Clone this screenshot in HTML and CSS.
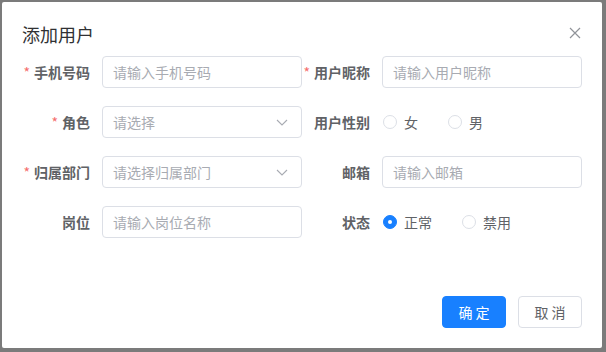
FILE: index.html
```html
<!DOCTYPE html>
<html lang="zh-CN">
<head>
    <meta charset="UTF-8">
    <meta name="viewport" content="width=device-width, initial-scale=1.0">
    <title>添加用户</title>
    <link rel="stylesheet" href="styles.css">
</head>
<body>
    <!-- Add user dialog -->
    <div class="dialog">
        <div class="dialog-header">
            <span class="dialog-title">添加用户</span>
            <button class="close-button">
                <svg width="12" height="12" viewBox="0 0 12 12" fill="none" stroke="currentColor" stroke-width="1.2">
                    <path d="M1 1L11 11M11 1L1 11"/>
                </svg>
            </button>
        </div>

        <form class="user-form">
            <div class="form-item">
                <label class="form-label required">手机号码</label>
                <input class="form-input" type="text" placeholder="请输入手机号码">
            </div>
            <div class="form-item">
                <label class="form-label required">用户昵称</label>
                <input class="form-input" type="text" placeholder="请输入用户昵称">
            </div>

            <div class="form-item">
                <label class="form-label required">角色</label>
                <div class="form-select">
                    <span class="placeholder">请选择</span>
                    <svg class="select-arrow" width="12" height="7" viewBox="0 0 12 7" fill="none" stroke="currentColor" stroke-width="1.1">
                        <path d="M1 1L6 6L11 1"/>
                    </svg>
                </div>
            </div>
            <div class="form-item">
                <label class="form-label">用户性别</label>
                <div class="radio-group">
                    <span class="radio"><span class="radio-inner"></span>女</span>
                    <span class="radio"><span class="radio-inner"></span>男</span>
                </div>
            </div>

            <div class="form-item">
                <label class="form-label required">归属部门</label>
                <div class="form-select">
                    <span class="placeholder">请选择归属部门</span>
                    <svg class="select-arrow" width="12" height="7" viewBox="0 0 12 7" fill="none" stroke="currentColor" stroke-width="1.1">
                        <path d="M1 1L6 6L11 1"/>
                    </svg>
                </div>
            </div>
            <div class="form-item">
                <label class="form-label">邮箱</label>
                <input class="form-input" type="text" placeholder="请输入邮箱">
            </div>

            <div class="form-item">
                <label class="form-label">岗位</label>
                <input class="form-input" type="text" placeholder="请输入岗位名称">
            </div>
            <div class="form-item">
                <label class="form-label">状态</label>
                <div class="radio-group">
                    <span class="radio checked"><span class="radio-inner"></span>正常</span>
                    <span class="radio"><span class="radio-inner"></span>禁用</span>
                </div>
            </div>
        </form>

        <div class="dialog-footer">
            <button class="btn btn-primary">确 定</button>
            <button class="btn">取 消</button>
        </div>
    </div>
</body>
</html>
```

FILE: styles.css
```css
* {
    margin: 0;
    padding: 0;
    box-sizing: border-box;
    font-family: 'Noto Sans CJK SC', 'Noto Sans', sans-serif;
}

body {
    width: 606px;
    height: 352px;
    background-color: #7b7b7b;
    padding: 2px;
    overflow: hidden;
}

/* Dialog */
.dialog {
    width: 600px;
    height: 346px;
    background-color: #fff;
    border-radius: 2px;
}

.dialog-header {
    display: flex;
    justify-content: space-between;
    align-items: center;
    padding: 20px 20px 10px;
}

.dialog-title {
    font-size: 18px;
    line-height: 24px;
    color: #303133;
}

.close-button {
    background: none;
    border: none;
    color: #909399;
    display: flex;
    align-items: center;
    justify-content: center;
    width: 16px;
    height: 16px;
    margin-top: -2px;
    margin-right: -1px;
    cursor: pointer;
}

/* Form */
.user-form {
    display: grid;
    grid-template-columns: 280px 280px;
    row-gap: 18px;
    padding: 0 20px;
}

.form-item {
    display: flex;
    align-items: center;
    height: 32px;
}

.form-label {
    width: 80px;
    padding-right: 12px;
    text-align: right;
    font-size: 14px;
    font-weight: 700;
    color: #606266;
    flex-shrink: 0;
}

.form-label.required::before {
    content: '*';
    color: #f56c6c;
    margin-right: 4px;
    font-weight: 400;
}

.form-input,
.form-select {
    width: 200px;
    height: 32px;
    border: 1px solid #dcdfe6;
    border-radius: 4px;
    padding: 0 10px;
    font-size: 14px;
    color: #606266;
    background: #fff;
    outline: none;
}

.form-input::placeholder,
.form-select .placeholder {
    color: #a8abb2;
}

.form-select {
    display: flex;
    align-items: center;
    justify-content: space-between;
}

.select-arrow {
    color: #a8abb2;
    margin-right: 3px;
}

/* Radios */
.radio-group {
    display: flex;
    align-items: center;
    padding-left: 1px;
}

.radio {
    display: flex;
    align-items: center;
    font-size: 14px;
    color: #606266;
    margin-right: 30px;
}

.radio-inner {
    width: 14px;
    height: 14px;
    border: 1px solid #dcdfe6;
    border-radius: 50%;
    margin-right: 7px;
    position: relative;
}

.radio.checked .radio-inner {
    background-color: #1880ff;
    border-color: #1880ff;
}

.radio.checked .radio-inner::after {
    content: '';
    position: absolute;
    left: 50%;
    top: 50%;
    width: 4px;
    height: 4px;
    margin: -2px 0 0 -2px;
    border-radius: 50%;
    background: #fff;
}

/* Footer */
.dialog-footer {
    display: flex;
    justify-content: flex-end;
    gap: 12px;
    padding: 58px 20px 20px;
}

.btn {
    width: 64px;
    height: 32px;
    border: 1px solid #dcdfe6;
    border-radius: 4px;
    background: #fff;
    font-size: 14px;
    color: #606266;
    cursor: pointer;
}

.btn-primary {
    background-color: #1880ff;
    border-color: #1880ff;
    color: #fff;
}
```
